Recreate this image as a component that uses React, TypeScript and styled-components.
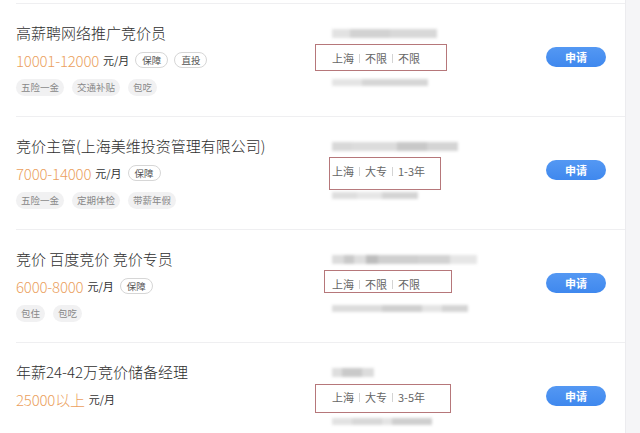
import styled, { createGlobalStyle } from "styled-components";

const GlobalStyle = createGlobalStyle`
  html, body {
    margin: 0;
    padding: 0;
    background: #f5f5f7;
    font-family: "Noto Sans CJK SC", "Noto Sans", sans-serif;
    overflow: hidden;
  }
`;

const Page = styled.div`
  display: flex;
  width: 640px;
  height: 433px;
  overflow: hidden;
`;

const Panel = styled.div`
  width: 626px;
  flex: none;
  background: #fff;
  border-right: 1px solid #ececef;
  padding-top: 3px;
  box-sizing: border-box;
`;

const Side = styled.div`
  flex: 1;
  background: #f5f5f7;
`;

const Row = styled.div`
  margin-left: 16px;
  height: 113px;
  box-sizing: border-box;
  border-top: 1px solid #efeff1;
  display: grid;
  grid-template-columns: 316px 214px 60px;
  align-items: start;
`;

const Left = styled.div`
  padding-top: 17px;
  display: flex;
  flex-direction: column;
`;

const Title = styled.div`
  font-size: 15px;
  font-weight: 300;
  line-height: 24px;
  color: #2e2e2e;
  white-space: nowrap;
`;

const SalaryLine = styled.div`
  margin-top: 4px;
  display: flex;
  align-items: center;
  height: 22px;
`;

const Salary = styled.span`
  font-size: 15px;
  font-weight: 300;
  color: #eb9f5e;
  letter-spacing: -0.2px;
`;

const Unit = styled.span`
  font-size: 11px;
  color: #333;
  margin-left: 4px;
`;

const Badge = styled.span`
  margin-left: 6px;
  height: 14px;
  padding: 0 6px;
  border: 1px solid #d6d6d6;
  border-radius: 8px;
  font-size: 9.5px;
  line-height: 14px;
  color: #555;
`;

const Perks = styled.div`
  margin-top: 8px;
  display: flex;
  gap: 8px;
`;

const Perk = styled.span`
  height: 17px;
  padding: 0 5px;
  border-radius: 9px;
  background: #f1f1f2;
  font-size: 9.5px;
  line-height: 17px;
  color: #888;
`;

const Middle = styled.div`
  padding-top: 25px;
  display: flex;
  flex-direction: column;
  align-items: flex-start;
`;

const Blur = styled.div<{ $h: number; $top: number }>`
  display: flex;
  height: ${(p) => p.$h}px;
  margin-top: ${(p) => p.$top}px;
  filter: blur(1.4px);
`;

const Seg = styled.span<{ $w: number; $c: string }>`
  width: ${(p) => p.$w}px;
  background: ${(p) => p.$c};
`;

const Mark = styled.div<{ $t: number; $r: number; $b: number; $l: number }>`
  margin: ${(p) => `${12 - p.$t}px ${-p.$r}px ${-p.$b}px ${-p.$l}px`};
  padding: ${(p) => `${p.$t - 1}px ${p.$r - 1}px ${p.$b - 1}px ${p.$l - 1}px`};
  border: 1px solid #b6777a;
`;

const Location = styled.div`
  display: flex;
  align-items: center;
  height: 16px;
  font-size: 11px;
  color: #666;
  white-space: nowrap;
`;

const Sep = styled.span`
  width: 1px;
  height: 9px;
  background: #d4d4d4;
  margin: 0 5px;
`;

const Apply = styled.button`
  margin-top: 43px;
  width: 60px;
  height: 20px;
  border: none;
  border-radius: 10px;
  background: linear-gradient(#5498f3, #3f88ee);
  color: #fff;
  font-family: inherit;
  font-size: 11px;
  font-weight: 600;
  padding: 0;
  cursor: pointer;
`;

type Job = {
  title: string;
  salary: string;
  badges: string[];
  perks: string[];
  loc: string[];
  mark: [number, number, number, number];
  top: [number, string][];
  bottom: [number, string][];
};

const jobs: Job[] = [
  {
    title: "高薪聘网络推广竞价员",
    salary: "10001-12000",
    badges: ["保障", "直投"],
    perks: ["五险一金", "交通补贴", "包吃"],
    loc: ["上海", "不限", "不限"],
    mark: [6, 27, 5, 17],
    top: [[18, "#e2e2e2"], [40, "#d2d2d2"], [47, "#d8d8d8"]],
    bottom: [[30, "#e4e4e4"], [66, "#d6d6d6"]],
  },
  {
    title: "竞价主管(上海美维投资管理有限公司)",
    salary: "7000-14000",
    badges: ["保障"],
    perks: ["五险一金", "定期体检", "带薪年假"],
    loc: ["上海", "大专", "1-3年"],
    mark: [6, 16, 11, 3],
    top: [[20, "#d8d8d8"], [45, "#dcdcdc"], [30, "#c8c8c8"], [31, "#d4d4d4"]],
    bottom: [[25, "#dedede"], [25, "#e6e6e6"], [36, "#d4d4d4"]],
  },
  {
    title: "竞价 百度竞价 竞价专员",
    salary: "6000-8000",
    badges: ["保障"],
    perks: ["包住", "包吃"],
    loc: ["上海", "不限", "不限"],
    mark: [6, 32, 1, 8],
    top: [[12, "#dcdcdc"], [10, "#c9c9c9"], [12, "#dedede"], [12, "#bdbdbd"], [40, "#cfcfcf"], [32, "#d2d2d2"], [27, "#e6e6e6"]],
    bottom: [[50, "#dcdcdc"], [40, "#cfcfcf"], [20, "#e4e4e4"], [26, "#d4d4d4"]],
  },
  {
    title: "年薪24-42万竞价储备经理",
    salary: "25000以上",
    badges: [],
    perks: [],
    loc: ["上海", "大专", "3-5年"],
    mark: [5, 26, 8, 17],
    top: [[10, "#dedede"], [20, "#c9c9c9"], [12, "#dcdcdc"]],
    bottom: [[20, "#e2e2e2"], [30, "#d8d8d8"], [10, "#e4e4e4"], [40, "#cfcfcf"]],
  },
];

function JobRow({ job }: { job: Job }) {
  const [t, r, b, l] = job.mark;
  return (
    <Row>
      <Left>
        <Title>{job.title}</Title>
        <SalaryLine>
          <Salary>{job.salary}</Salary>
          <Unit>元/月</Unit>
          {job.badges.map((x) => (
            <Badge key={x}>{x}</Badge>
          ))}
        </SalaryLine>
        {job.perks.length > 0 && (
          <Perks>
            {job.perks.map((x) => (
              <Perk key={x}>{x}</Perk>
            ))}
          </Perks>
        )}
      </Left>
      <Middle>
        <Blur $h={9} $top={0}>
          {job.top.map(([w, c], i) => (
            <Seg key={i} $w={w} $c={c} />
          ))}
        </Blur>
        <Mark $t={t} $r={r} $b={b} $l={l}>
          <Location>
            {job.loc.map((x, i) => (
              <span key={x + i} style={{ display: "contents" }}>
                {i > 0 && <Sep />}
                {x}
              </span>
            ))}
          </Location>
        </Mark>
        <Blur $h={7} $top={13}>
          {job.bottom.map(([w, c], i) => (
            <Seg key={i} $w={w} $c={c} />
          ))}
        </Blur>
      </Middle>
      <Apply>申请</Apply>
    </Row>
  );
}

export default function App() {
  return (
    <>
      <GlobalStyle />
      <Page>
        <Panel>
          {jobs.map((j) => (
            <JobRow key={j.title} job={j} />
          ))}
        </Panel>
        <Side />
      </Page>
    </>
  );
}
